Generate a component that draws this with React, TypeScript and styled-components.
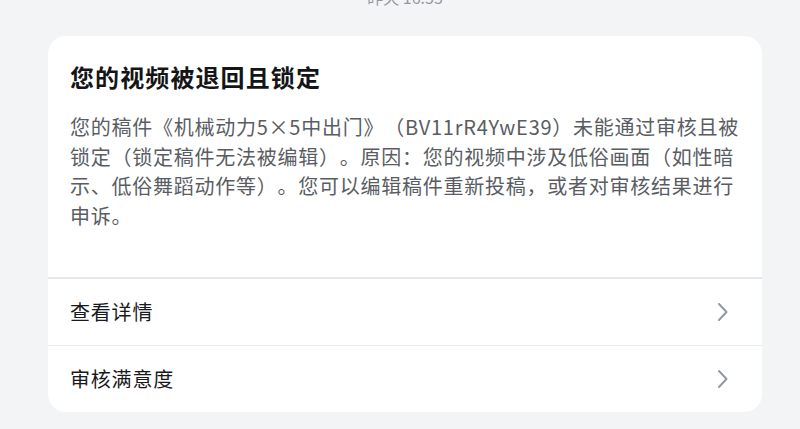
import React from "react";
import styled, { createGlobalStyle } from "styled-components";

const Global = createGlobalStyle`
  html, body { margin: 0; padding: 0; background: #f3f4f6; }
  body {
    font-family: "Noto Sans CJK SC", "Noto Sans", "Liberation Sans", sans-serif;
    overflow: hidden;
    text-spacing-trim: space-all;
  }
`;

const Page = styled.div`
  width: 800px;
  height: 429px;
  background: #f3f4f6;
  overflow: hidden;
  display: flex;
  flex-direction: column;
`;

const Time = styled.div`
  height: 50px;
  margin-top: -14px;
  text-align: center;
  font-size: 16px;
  line-height: 22px;
  color: #9499a0;
  padding-left: 10px;
`;

const Card = styled.div`
  margin-left: 48px;
  width: 714px;
  background: #ffffff;
  border-radius: 18px;
  overflow: hidden;
`;

const Body = styled.div`
  padding: 24px 22px 47px 22px;
  display: flex;
  flex-direction: column;
  gap: 18px;
`;

const Title = styled.div`
  font-size: 24px;
  line-height: 34px;
  font-weight: 700;
  letter-spacing: 1.1px;
  color: #141517;
`;

const Text = styled.div`
  font-size: 20px;
  line-height: 29.5px;
  letter-spacing: 0.75px;
  color: #595d63;
`;

const Row = styled.div<{ $thick?: boolean }>`
  height: 66px;
  display: flex;
  align-items: center;
  justify-content: space-between;
  padding: 0 33px 0 22px;
  border-top: ${(p) => (p.$thick ? "2px solid #e6e7e9" : "1px solid #eaebec")};
`;

const RowLabel = styled.span`
  font-size: 20px;
  letter-spacing: 0.8px;
  color: #18191c;
  margin-top: -2px;
`;

const Chevron = () => (
  <svg width="12" height="20" viewBox="0 0 12 20" fill="none">
    <path d="M2 2 L9.5 10 L2 18" stroke="#9499a0" strokeWidth="2" strokeLinecap="round" strokeLinejoin="round" />
  </svg>
);

export default function App() {
  return (
    <Page lang="zh-CN">
      <Global />
      <Time>昨天 16:55</Time>
      <Card>
        <Body>
          <Title>您的视频被退回且锁定</Title>
          <Text>
            您的稿件《机械动力5×5中出门》（BV11rR4YwE39）未能通过审核且被锁定（锁定稿件无法被编辑）。原因：您的视频中涉及低俗画面（如性暗示、低俗舞蹈动作等）。您可以编辑稿件重新投稿，或者对审核结果进行申诉。
          </Text>
        </Body>
        <Row $thick>
          <RowLabel>查看详情</RowLabel>
          <Chevron />
        </Row>
        <Row>
          <RowLabel>审核满意度</RowLabel>
          <Chevron />
        </Row>
      </Card>
    </Page>
  );
}
